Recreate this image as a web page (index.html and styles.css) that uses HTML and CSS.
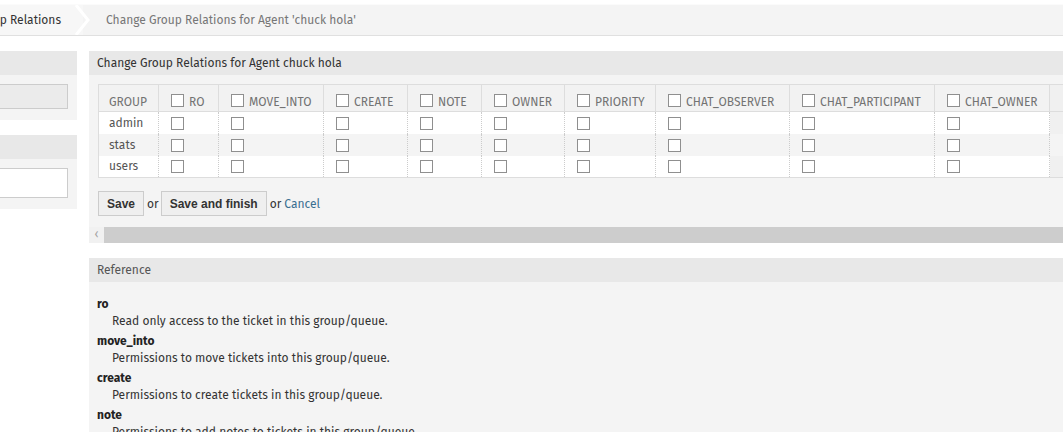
FILE: index.html
```html
<!DOCTYPE html>
<html lang="en">
<head>
<meta charset="utf-8">
<title>Change Group Relations</title>
<link rel="stylesheet" href="styles.css">
</head>
<body>
<div class="page">
  <nav class="breadcrumb">
    <div class="crumb crumb-first"><span class="crumb-clip">Manage Agent-Group Relations</span></div>
    <svg class="crumb-sep" width="18" height="30" viewBox="0 0 18 30"><polyline points="2,0 14,15 2,30" fill="none" stroke="#ffffff" stroke-width="3"/></svg>
    <div class="crumb crumb-current">Change Group Relations for Agent 'chuck hola'</div>
  </nav>

  <div class="layout">
    <aside class="sidebar">
      <div class="widget">
        <div class="widget-head"></div>
        <div class="widget-body side-body">
          <div class="side-button"></div>
        </div>
      </div>
      <div class="widget">
        <div class="widget-head"></div>
        <div class="widget-body side-body">
          <div class="side-input"></div>
        </div>
      </div>
    </aside>

    <main class="content">
      <section class="widget">
        <div class="widget-head">Change Group Relations for Agent chuck hola</div>
        <div class="widget-body main-body">
          <div class="scroll-area">
            <table class="perm-table">
              <colgroup>
                <col class="c-group"><col class="c-ro"><col class="c-move"><col class="c-create"><col class="c-note"><col class="c-owner"><col class="c-prio"><col class="c-cobs"><col class="c-cpart"><col class="c-cown"><col class="c-rw">
              </colgroup>
              <thead>
                <tr>
                  <th>GROUP</th>
                  <th><span class="cb"></span>RO</th>
                  <th><span class="cb"></span>MOVE_INTO</th>
                  <th><span class="cb"></span>CREATE</th>
                  <th><span class="cb"></span>NOTE</th>
                  <th><span class="cb"></span>OWNER</th>
                  <th><span class="cb"></span>PRIORITY</th>
                  <th><span class="cb"></span>CHAT_OBSERVER</th>
                  <th><span class="cb"></span>CHAT_PARTICIPANT</th>
                  <th><span class="cb"></span>CHAT_OWNER</th>
                  <th><span class="cb"></span>RW</th>
                </tr>
              </thead>
              <tbody>
                <tr>
                  <td>admin</td>
                  <td><span class="cb"></span></td><td><span class="cb"></span></td><td><span class="cb"></span></td><td><span class="cb"></span></td><td><span class="cb"></span></td><td><span class="cb"></span></td><td><span class="cb"></span></td><td><span class="cb"></span></td><td><span class="cb"></span></td><td><span class="cb"></span></td>
                </tr>
                <tr class="alt">
                  <td>stats</td>
                  <td><span class="cb"></span></td><td><span class="cb"></span></td><td><span class="cb"></span></td><td><span class="cb"></span></td><td><span class="cb"></span></td><td><span class="cb"></span></td><td><span class="cb"></span></td><td><span class="cb"></span></td><td><span class="cb"></span></td><td><span class="cb"></span></td>
                </tr>
                <tr>
                  <td>users</td>
                  <td><span class="cb"></span></td><td><span class="cb"></span></td><td><span class="cb"></span></td><td><span class="cb"></span></td><td><span class="cb"></span></td><td><span class="cb"></span></td><td><span class="cb"></span></td><td><span class="cb"></span></td><td><span class="cb"></span></td><td><span class="cb"></span></td>
                </tr>
              </tbody>
            </table>
            <div class="actions">
              <button class="btn" type="button">Save</button>
              <span class="or">or</span>
              <button class="btn" type="button">Save and finish</button>
              <span class="or or-last">or</span>
              <a class="cancel" href="#">Cancel</a>
            </div>
          </div>
          <div class="hscroll">
            <span class="hscroll-arrow">&lsaquo;</span>
            <span class="hscroll-thumb"></span>
          </div>
        </div>
      </section>

      <section class="widget ref-widget">
        <div class="widget-head ref-head">Reference</div>
        <div class="widget-body ref-body">
          <dl class="ref-list">
            <dt>ro</dt>
            <dd>Read only access to the ticket in this group/queue.</dd>
            <dt>move_into</dt>
            <dd>Permissions to move tickets into this group/queue.</dd>
            <dt>create</dt>
            <dd>Permissions to create tickets in this group/queue.</dd>
            <dt>note</dt>
            <dd>Permissions to add notes to tickets in this group/queue.</dd>
          </dl>
        </div>
      </section>
    </main>
  </div>
</div>
</body>
</html>
```

FILE: styles.css
```css
* { box-sizing: border-box; }

html, body {
  margin: 0;
  padding: 0;
  background: #ffffff;
  overflow: hidden;
}

body {
  font-family: "Fira Sans", Lato, "Noto Sans", sans-serif;
  font-size: 12px;
  color: #333333;
}

.page {
  width: 1063px;
  height: 432px;
  overflow: hidden;
  padding-top: 5px;
}

/* breadcrumb */
.breadcrumb {
  display: flex;
  align-items: stretch;
  height: 31px;
  background: #f4f4f4;
  border-bottom: 1px solid #e0e0e0;
  box-shadow: 0 -1px 0 #fbfbfb;
}

.crumb {
  display: flex;
  align-items: center;
  white-space: nowrap;
}

.crumb-first {
  width: 74px;
  padding-right: 13px;
  overflow: hidden;
  justify-content: flex-end;
  color: #333333;
  background: #f7f7f7;
}

.crumb-clip {
  display: block;
  flex: none;
}

.crumb-sep {
  flex: none;
  display: block;
  width: 18px;
  height: 30px;
  background: linear-gradient(to right, #f7f7f7 0, #f7f7f7 50%, #f4f4f4 50%);
}

.crumb-current {
  padding-left: 14px;
  color: #777777;
}

/* layout */
.layout {
  display: flex;
  gap: 12px;
  padding-top: 15px;
}

.sidebar {
  flex: none;
  width: 77px;
  display: flex;
  flex-direction: column;
  gap: 15px;
}

.content {
  flex: none;
  width: 1100px;
  display: flex;
  flex-direction: column;
  gap: 15px;
}

.widget {
  background: #f4f4f4;
}

.widget-head {
  height: 24px;
  line-height: 24px;
  padding-left: 8px;
  background: #e8e8e8;
  color: #333333;
  white-space: nowrap;
}

.side-body {
  padding: 9px 9px 11px 0;
}

.side-button {
  height: 25px;
  background: #ebebeb;
  border: 1px solid #cccccc;
  border-left: none;
}

.side-input {
  height: 30px;
  background: #ffffff;
  border: 1px solid #cccccc;
  border-left: none;
}

/* main widget */
.main-body {
  padding: 9px 0 0 0;
}

.scroll-area {
  padding-left: 9px;
  overflow: hidden;
}

.perm-table {
  table-layout: fixed;
  border-collapse: collapse;
  width: 1011px;
  background: #ffffff;
  border: 1px solid #dddddd;
  border-right: none;
}

.c-group { width: 60px; }
.c-ro { width: 60px; }
.c-move { width: 105px; }
.c-create { width: 84px; }
.c-note { width: 74px; }
.c-owner { width: 83px; }
.c-prio { width: 91px; }
.c-cobs { width: 134px; }
.c-cpart { width: 145px; }
.c-cown { width: 115px; }
.c-rw { width: 60px; }

.perm-table th {
  height: 27px;
  padding: 7px 0 0 12px;
  text-align: left;
  font-weight: normal;
  font-size: 12px;
  color: #737373;
  background: #f2f2f2;
  border-left: 1px solid #dddddd;
  border-bottom: 1px solid #dddddd;
  white-space: nowrap;
  vertical-align: middle;
}

.perm-table th:first-child {
  padding-left: 10px;
  border-left: none;
}

.perm-table td {
  height: 22px;
  padding: 0 0 0 12px;
  border-left: 1px dotted #cccccc;
  vertical-align: middle;
  white-space: nowrap;
  color: #555555;
}

.perm-table td:first-child {
  padding-left: 10px;
  border-left: none;
}

.perm-table tr.alt td {
  background: #f4f4f4;
}

.perm-table th:last-child,
.perm-table td:last-child {
  padding-left: 24px;
  background: #f0f0f0;
}

.cb {
  display: inline-block;
  width: 13px;
  height: 13px;
  background: #ffffff;
  border: 1px solid #8f8f8f;
  vertical-align: -2px;
}

th .cb {
  margin-right: 5px;
  vertical-align: -1px;
}

td .cb {
  vertical-align: middle;
}

.actions {
  display: flex;
  align-items: center;
  padding: 13px 0 11px 0;
}

.btn {
  height: 25px;
  padding: 0 8px;
  font-family: "Liberation Sans", Arial, sans-serif;
  font-size: 12px;
  font-weight: bold;
  color: #333333;
  background: #efefef;
  border: 1px solid #cccccc;
  border-radius: 0;
}

.or {
  color: #333333;
  margin: 0 2px 0 3px;
}

.or-last {
  margin-right: 3px;
}

.cancel {
  color: #3a6f91;
  text-decoration: none;
}

.hscroll {
  display: flex;
  height: 16px;
  background: #f1f1f1;
}

.hscroll-arrow {
  flex: none;
  width: 15px;
  line-height: 15px;
  text-align: center;
  color: #a3a3a3;
  font-size: 12px;
}

.hscroll-thumb {
  flex: 1;
  background: #cdcdcd;
}

/* reference */
.ref-head {
  color: #555555;
}

.ref-body {
  height: 200px;
  padding: 14px 8px 0 8px;
}

.ref-list {
  margin: 0;
}

.ref-list dt {
  font-weight: bold;
  line-height: 17px;
  color: #222222;
}

.ref-list dd {
  margin: 0 0 3px 15px;
  line-height: 17px;
  color: #333333;
}
```
